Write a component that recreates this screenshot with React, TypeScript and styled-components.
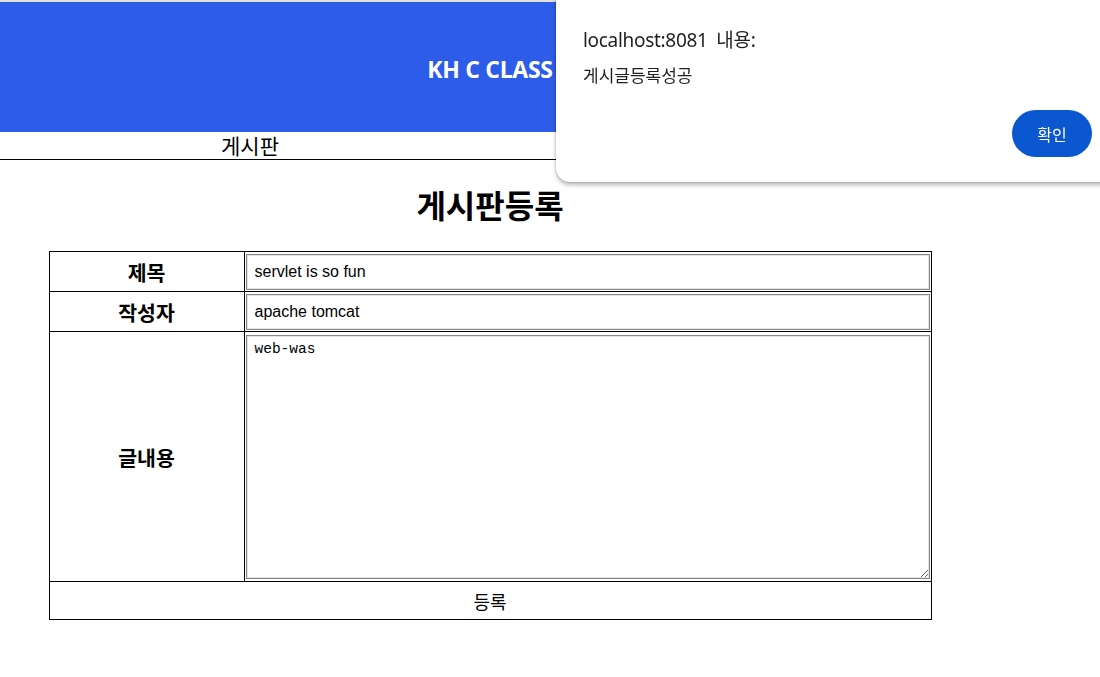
import styled, { createGlobalStyle } from 'styled-components';

const GlobalStyle = createGlobalStyle`
    html, body {
        margin: 0;
        padding: 0;
        background: #ffffff;
        font-family: 'Noto Sans CJK KR', 'Noto Sans', sans-serif;
        color: #000000;
    }
    body {
        border-top: 2px solid #dfe1e5;
    }
`;

const Page = styled.div`
    width: 980px;
`;

const Header = styled.header`
    height: 130px;
    background: #2d5de8;
    display: flex;
    align-items: center;
    justify-content: center;
`;

const Brand = styled.h1`
    margin: 0;
    padding-top: 4px;
    font-family: 'Open Sans', 'Noto Sans', sans-serif;
    font-size: 23px;
    font-weight: 700;
    color: #ffffff;
    letter-spacing: -0.3px;
`;

const Nav = styled.nav`
    display: flex;
    width: 1100px;
    height: 27px;
    border-bottom: 1px solid #000000;
`;

const NavItem = styled.a`
    width: 500px;
    text-align: center;
    font-size: 21px;
    line-height: 27px;
    color: #000000;
    text-decoration: none;
`;

const Section = styled.section`
    display: flex;
    flex-direction: column;
    align-items: center;
`;

const Title = styled.h2`
    margin: 26px 0 29px;
    font-size: 32px;
    font-weight: 700;
    line-height: 36px;
`;

const Table = styled.table`
    width: 883px;
    border-collapse: collapse;
    border: 1px solid #000000;
`;

const Th = styled.th<{ $height: number }>`
    width: 194px;
    height: ${(p) => p.$height}px;
    padding: 0;
    border: 1px solid #000000;
    font-size: 20.5px;
    font-weight: 700;
    text-align: center;
`;

const Td = styled.td`
    padding: 1px;
    border: 1px solid #000000;
    vertical-align: middle;
`;

const TextInput = styled.input`
    box-sizing: border-box;
    display: block;
    width: 100%;
    height: 36px;
    margin: 0;
    padding: 0 8px;
    border: 1px solid #858585;
    box-shadow: inset 0 0 0 1px #e4e4e4;
    font-family: 'Liberation Sans', Arial, sans-serif;
    font-size: 16px;
    color: #000000;
    background: #ffffff;
    outline: none;
`;

const TextArea = styled.textarea`
    box-sizing: border-box;
    display: block;
    width: 100%;
    height: 244px;
    margin: 0;
    padding: 5px 8px;
    border: 1px solid #858585;
    box-shadow: inset 0 0 0 1px #e4e4e4;
    font-family: 'Liberation Mono', 'DejaVu Sans Mono', monospace;
    font-size: 14.5px;
    color: #000000;
    resize: vertical;
    outline: none;
`;

const SubmitCell = styled.td`
    height: 37px;
    padding: 0;
    border: 1px solid #000000;
    text-align: center;
    font-size: 18px;
`;

const Dialog = styled.div`
    position: fixed;
    top: -20px;
    left: 556px;
    width: 580px;
    height: 202px;
    box-sizing: border-box;
    padding: 46px 0 0 27px;
    background: #ffffff;
    border-radius: 14px;
    box-shadow: 0 3px 4px rgba(0, 0, 0, 0.28), 0 0 2px rgba(0, 0, 0, 0.22);
    display: flex;
    flex-direction: column;
`;

const DialogTitle = styled.div`
    font-family: 'Noto Sans', 'Noto Sans CJK KR', sans-serif;
    font-size: 19px;
    line-height: 28px;
    color: #1f1f1f;
    letter-spacing: -0.3px;
    word-spacing: 4px;
`;

const DialogMessage = styled.div`
    margin-top: 9px;
    font-size: 17px;
    line-height: 24px;
    color: #1f1f1f;
`;

const DialogActions = styled.div`
    display: flex;
    justify-content: flex-end;
    margin-top: 23px;
    padding-right: 44px;
`;

const ConfirmButton = styled.button`
    width: 80px;
    height: 47px;
    border: none;
    border-radius: 24px;
    background: #0b57d0;
    color: #ffffff;
    font-family: 'Noto Sans CJK KR', sans-serif;
    font-size: 16px;
    cursor: pointer;
`;

export default function App() {
    return (
        <>
            <GlobalStyle />
            <Page>
                <Header>
                    <Brand>KH C CLASS</Brand>
                </Header>
                <Nav>
                    <NavItem href="#">게시판</NavItem>
                </Nav>
                <Section>
                    <Title>게시판등록</Title>
                    <Table>
                        <tbody>
                            <tr>
                                <Th $height={39}>제목</Th>
                                <Td>
                                    <TextInput defaultValue="servlet is so fun" />
                                </Td>
                            </tr>
                            <tr>
                                <Th $height={39}>작성자</Th>
                                <Td>
                                    <TextInput defaultValue="apache tomcat" />
                                </Td>
                            </tr>
                            <tr>
                                <Th $height={249}>글내용</Th>
                                <Td>
                                    <TextArea defaultValue="web-was" />
                                </Td>
                            </tr>
                            <tr>
                                <SubmitCell colSpan={2}>등록</SubmitCell>
                            </tr>
                        </tbody>
                    </Table>
                </Section>
            </Page>
            <Dialog role="alertdialog">
                <DialogTitle>localhost:8081 내용:</DialogTitle>
                <DialogMessage>게시글등록성공</DialogMessage>
                <DialogActions>
                    <ConfirmButton>확인</ConfirmButton>
                </DialogActions>
            </Dialog>
        </>
    );
}
